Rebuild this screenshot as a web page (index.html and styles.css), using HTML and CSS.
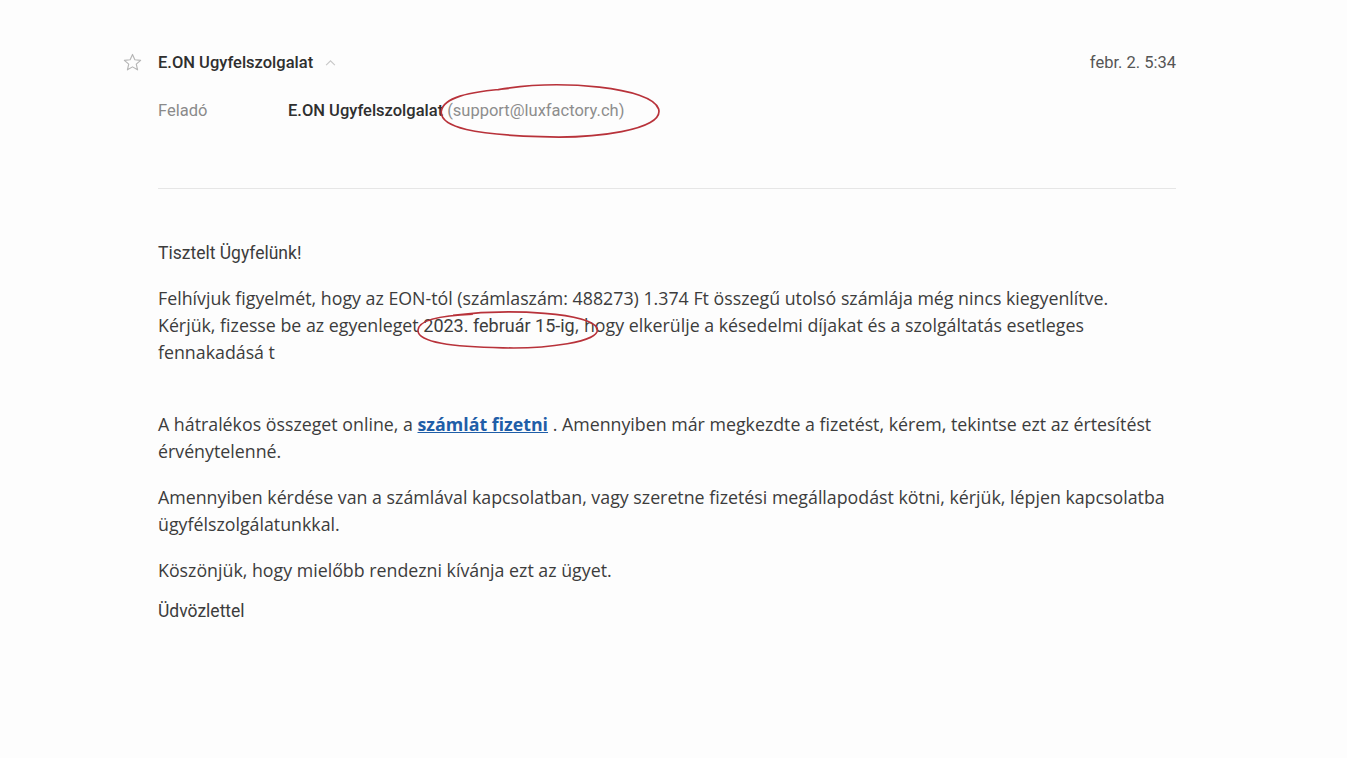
FILE: index.html
```html
<!DOCTYPE html>
<html lang="hu">
<head>
    <meta charset="UTF-8">
    <meta name="viewport" content="width=device-width, initial-scale=1.0">
    <title>E.ON Ugyfelszolgalat</title>
    <link rel="stylesheet" href="styles.css">
</head>
<body>
    <div class="mail">
        <div class="mail-head">
            <svg class="star" viewBox="0 0 24 24" width="21" height="21">
                <path d="M12 2.8l2.7 6.1 6.6.6-5 4.4 1.5 6.5L12 17l-5.8 3.4 1.5-6.5-5-4.4 6.6-.6z" fill="none" stroke="#b5b5b5" stroke-width="1.3" stroke-linejoin="round"/>
            </svg>
            <span class="sender">E.ON Ugyfelszolgalat</span>
            <svg class="chevron" viewBox="0 0 12 8" width="11" height="7">
                <path d="M1 7l5-5 5 5" fill="none" stroke="#c8c8c8" stroke-width="1.3"/>
            </svg>
            <span class="date">febr. 2. 5:34</span>
        </div>

        <div class="mail-from">
            <span class="label">Feladó</span>
            <span class="from-name">E.ON Ugyfelszolgalat</span>
            <span class="marked">
                <span class="from-addr">(support@luxfactory.ch)</span>
                <svg class="circle circle-addr" viewBox="0 0 220 56" preserveAspectRatio="none">
                    <path d="M60 8 C120 -2 205 6 212 26 C218 46 150 54 100 52 C40 50 4 44 6 28 C8 16 30 10 70 7" fill="none" stroke="#b8323a" stroke-width="1.6"/>
                </svg>
            </span>
        </div>

        <hr class="divider">

        <div class="mail-body">
            <p class="greeting">Tisztelt Ügyfelünk!</p>
            <p>Felhívjuk figyelmét, hogy az EON-tól (számlaszám: 488273) 1.374 Ft összegű utolsó számlája még nincs kiegyenlítve.<br>
            Kérjük, fizesse be az egyenleget <span class="marked"><span class="date-due">2023. február 15-ig</span><svg class="circle circle-date" viewBox="0 0 190 40" preserveAspectRatio="none">
                <path d="M40 6 C100 -1 176 4 184 18 C190 32 130 38 90 37 C40 36 4 32 5 20 C6 10 30 6 60 5" fill="none" stroke="#b8323a" stroke-width="1.6"/>
            </svg></span>, hogy elkerülje a késedelmi díjakat és a szolgáltatás esetleges fennakadásá t</p>

            <p class="spaced">A hátralékos összeget online, a <a href="#" class="pay-link">számlát fizetni</a> . Amennyiben már megkezdte a fizetést, kérem, tekintse ezt az értesítést érvénytelenné.</p>
            <p>Amennyiben kérdése van a számlával kapcsolatban, vagy szeretne fizetési megállapodást kötni, kérjük, lépjen kapcsolatba ügyfélszolgálatunkkal.</p>
            <p>Köszönjük, hogy mielőbb rendezni kívánja ezt az ügyet.</p>
            <p class="greeting closing">Üdvözlettel</p>
        </div>
    </div>
</body>
</html>
```

FILE: styles.css
```css
body {
    margin: 0;
    background-color: #fdfdfd;
    font-family: "Open Sans", "Liberation Sans", sans-serif;
    color: #3c3c3c;
}

.mail {
    width: 1054px;
    padding: 50px 0 0 122px;
}

.mail-head {
    display: flex;
    align-items: center;
    height: 24px;
}

.star {
    margin-right: 15px;
}

.sender {
    font-family: Roboto, "Liberation Sans", sans-serif;
    font-weight: 500;
    font-size: 16.5px;
    color: #2f2f2f;
}

.chevron {
    margin-left: 12px;
}

.date {
    margin-left: auto;
    font-family: Roboto, "Liberation Sans", sans-serif;
    font-size: 16.5px;
    color: #555;
}

.mail-from {
    display: flex;
    align-items: center;
    margin-top: 24px;
    padding-left: 36px;
    height: 24px;
    font-family: Roboto, "Liberation Sans", sans-serif;
    font-size: 16.5px;
}

.label {
    width: 130px;
    color: #8a8a8a;
}

.from-name {
    font-weight: 500;
    color: #2f2f2f;
    margin-right: 4px;
}

.from-addr {
    color: #8d8d8d;
}

.marked {
    position: relative;
    display: inline-block;
}

.circle {
    position: absolute;
    pointer-events: none;
    overflow: visible;
}

.circle-addr {
    left: -12px;
    top: -20px;
    width: 232px;
    height: 60px;
}

.circle-date {
    left: -10px;
    top: -3px;
    width: 190px;
    height: 42px;
}

.date-due {
    font-family: Roboto, "Liberation Sans", sans-serif;
    font-size: 18px;
}

.divider {
    margin: 66px 0 0 36px;
    border: none;
    border-top: 1px solid #e6e6e6;
}

.mail-body {
    padding: 51px 0 0 36px;
    margin-right: -8px;
    font-size: 17.8px;
    line-height: 27px;
}

.mail-body p {
    margin: 0 0 19px;
}

.mail-body .greeting {
    font-family: Roboto, "Liberation Sans", sans-serif;
    font-size: 17.5px;
    margin-bottom: 18px;
}

.mail-body .closing {
    margin-top: -5px;
}

.mail-body .spaced {
    margin-top: 45px;
}

.pay-link {
    color: #1f5ea8;
    font-weight: 700;
    text-decoration: underline;
}
```
